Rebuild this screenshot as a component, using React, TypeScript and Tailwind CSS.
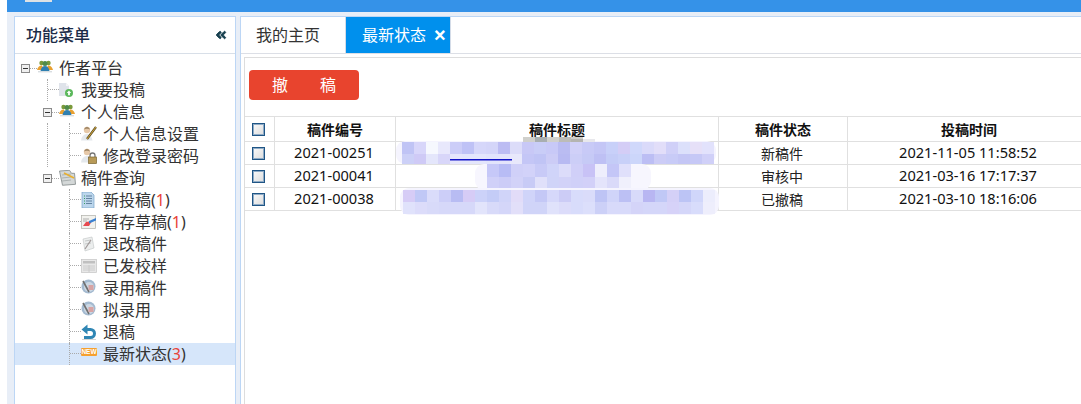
import React from 'react'
import { FaAngleDoubleLeft } from 'react-icons/fa'

// blurred (mosaic) title cells of the table
const mosaic = [
  { x: 7, y: 6, h: 12, c: 'c0c4f5 d8d6fa f6f8fe e8e8fc cccdf8 bfc2f6 d6d7fa d4d5f9 bcbcf3 dcdcf9 c8c8f6 c9cdf7 c8c9f7 babcf2 d0d0f8 c8caf7 c4c6f6 c8d0f9 d4cdf6 d0d8fb dadafa e2def9 d0d0f8 dce0fb e6e0f8 e2e2fc' },
  { x: 7, y: 18, h: 10, c: 'ccd0f7 cfcaf6 e4e6fb d8d6f9 e6e6fc e4e6fc e4e6fc e2e4fc e4e4fb e8e8fb c4c6f6 c0c4f5 ccccf6 b8baf2 cccef7 c6caf6 bec0f4 c4ccf7 c8d0f8 ccd6fa bcbef4 ccccf6 c8cbf7 c4c6f5 c6c8f6 d0d0f8' },
  { x: 92, y: 28, h: 13, c: 'c6c8f8 b8bcf5 d0d0f8 d2d2f9 c8caf7 d0d4f9 dcdcfa d0cff8 c8c2f6 eeeefc c4c6f7 e0e0fb' },
  { x: 92, y: 41, h: 11, c: 'd0d0f8 ccccf7 d2d2f8 c8cbf6 e0e0fa d0d4f8 d2d2f8 d0d0f8 d2d0f8 e4e4fb dadaf9 f0f0fc' },
  { x: 8, y: 54, h: 12, c: 'd6ccf6 c0c8f6 dadcfa cccef8 b8bcf3 d6ccf6 ccd2f9 c4ccf7 d0d4f9 e2dcf8 d0d4f9 c4c8f6 d6d8fa ccccf6 d8dcfb dadcfa bec4f5 d0d4f9 bcc0f4 d8dafa b8b6f2 c0c8f6 d4d0f7 bcc4f5 d0d6fa ecedfc' },
  { x: 8, y: 66, h: 12, c: 'e0e2fb dcdcfa d8daf9 d6d8f9 d6d8f9 d6d8f9 e2e4fb d8daf9 d4d6f9 e2dff9 d0d4f8 d0d4f8 e0e2fb dcdcfa d8dcfb dcdffb ccd0f7 d8dafa d8dafa d4d4f8 d4d6f9 d4d6f9 d6d2f8 d4d6f9 d8dcfb eeeefc' },
]

const Mosaic = () => (
  <svg className="absolute left-[150px] top-[20px]" width="330" height="80" viewBox="0 0 330 80">
    <rect x="1" y="5" width="320" height="23" rx="9" fill="#f5f4fe" />
    <rect x="80" y="28" width="176" height="26" rx="9" fill="#f7f6fe" />
    <rect x="5" y="52" width="319" height="27" rx="9" fill="#f5f4fe" />
    <rect x="128" y="1" width="60" height="5" fill="#d0d0cc" />
    <rect x="140" y="1" width="12" height="5" fill="#a8aeb0" />
    <rect x="164" y="1" width="12" height="5" fill="#bcbcb8" />
    <rect x="176" y="3" width="12" height="3" fill="#b4b4b0" />
    <rect x="188" y="3" width="12" height="3" fill="#e8e8ec" />
    {mosaic.map((row) =>
      row.c.split(' ').map((color, i) => (
        <rect key={row.y + '-' + i} x={row.x + i * 12} y={row.y} width="12" height={row.h} fill={'#' + color} />
      ))
    )}
    <rect x="55" y="23" width="62" height="1.5" fill="#1414c8" />
  </svg>
)

const Users = () => (
  <svg width="16" height="13" viewBox="0 0 16 13" className="-mt-1">
    <circle cx="4.5" cy="3" r="2.2" fill="#7a9a3a" />
    <circle cx="11.5" cy="3" r="2.2" fill="#7a9a3a" />
    <path d="M0 10 Q1.5 5 5 5.5 L7 10Z" fill="#e8a030" />
    <path d="M16 10 Q14.5 5 11 5.5 L9 10Z" fill="#e8a030" />
    <circle cx="8" cy="3.6" r="2.5" fill="#4f8a4a" />
    <path d="M3.5 11 Q4.5 6 8 6 Q11.5 6 12.5 11Z" fill="#2f7fb0" />
    <rect x="1" y="11" width="14" height="1.4" fill="#d8dde0" />
  </svg>
)

const DocAdd = () => (
  <svg width="16" height="16" viewBox="0 0 16 16">
    <path d="M0 1h7l3 3v10H0z" fill="#dfe3ea" />
    <path d="M7 1l3 3H7z" fill="#f4f4f6" />
    <circle cx="10" cy="11" r="4" fill="#5cb85c" />
    <path d="M10 8.5l2.2 2.4h-1.3v2.4H9.1v-2.4H7.8z" fill="#fff" />
  </svg>
)

const UserBase = () => (
  <>
    <circle cx="6" cy="4" r="3.2" fill="#e6c8a8" />
    <path d="M2.8 3.5 Q6 -2 9.2 3.5 Q6 2 2.8 3.5Z" fill="#a08868" />
    <path d="M0 14.5 Q1 8 6 8 Q10 8 11.5 14.5Z" fill="#e4e8ec" />
  </>
)

const UserPen = () => (
  <svg width="16" height="16" viewBox="0 0 16 16">
    <UserBase />
    <path d="M15 1L6 13" stroke="#5a4c22" strokeWidth="2.2" />
    <path d="M15 1L6 13" stroke="#e0b040" strokeWidth="0.9" />
  </svg>
)

const UserLock = () => (
  <svg width="16" height="16" viewBox="0 0 16 16">
    <UserBase />
    <path d="M9 9V7.5a2.5 2.5 0 0 1 5 0V9" fill="none" stroke="#777" strokeWidth="1.3" />
    <rect x="7.5" y="9" width="8" height="6.5" fill="#b89a58" stroke="#7a6430" strokeWidth="0.7" />
  </svg>
)

const QueryDoc = () => (
  <svg width="17" height="16" viewBox="0 0 17 16">
    <path d="M0.5 1l10 -0.7 2 3 3 0 1 11 -13 1z" fill="#d4d8d8" stroke="#7f8686" strokeWidth="0.8" />
    <path d="M3 5l9 -1M3 8l9 -1M3 11l9 -1" stroke="#9aa0a0" strokeWidth="0.7" />
    <path d="M5 3l10 5" stroke="#e8b030" strokeWidth="1.6" />
  </svg>
)

const DocList = () => (
  <svg width="14" height="16" viewBox="0 0 14 16">
    <path d="M1 0h9l3 3v13H1z" fill="#bcd6ec" stroke="#7aa4c8" strokeWidth="0.7" />
    <path d="M5 4h6M5 6.5h6M5 9h6M5 11.5h6" stroke="#5a7a9a" strokeWidth="0.9" />
    <path d="M3 4h1M3 6.5h1M3 9h1M3 11.5h1" stroke="#3aa060" strokeWidth="1" />
  </svg>
)

const Draft = () => (
  <svg width="16" height="14" viewBox="0 0 16 14">
    <rect x="0.5" y="0.5" width="14" height="13" fill="#f2f2ee" stroke="#b0b0aa" strokeWidth="0.7" />
    <path d="M2 4h6M2 6h4" stroke="#a0a0a0" strokeWidth="0.8" />
    <path d="M2 11l3 -4 6 -1 -3 5z" fill="#e84a50" />
    <path d="M8 6l7 -3 0 2.5 -7 3z" fill="#3a80d0" />
  </svg>
)

const ReturnDoc = () => (
  <svg width="14" height="16" viewBox="0 0 14 16">
    <path d="M2 3l9 -2 2 11 -9 3z" fill="#eceeee" stroke="#c0c4c4" strokeWidth="0.6" />
    <path d="M4 5l6 -1M4 8l6 -1" stroke="#b4b8b8" strokeWidth="0.7" />
    <path d="M4 13l6 -9" stroke="#a09898" strokeWidth="1.2" />
  </svg>
)

const Paper = () => (
  <svg width="16" height="14" viewBox="0 0 16 14">
    <rect x="0.5" y="0.5" width="15" height="13" fill="#e8e8e8" stroke="#c4c4c4" strokeWidth="0.7" />
    <rect x="2" y="2" width="12" height="2.5" fill="#c0c0c0" />
    <path d="M2 7h12M2 9h12M2 11h12M8 6v7" stroke="#c8c8c8" strokeWidth="0.9" />
  </svg>
)

const Accept = () => (
  <svg width="15" height="15" viewBox="0 0 15 15" className="-mt-1">
    <ellipse cx="7.5" cy="7.5" rx="7" ry="7" fill="#a4bad0" />
    <ellipse cx="8" cy="8" rx="5" ry="5" fill="#ccd8e4" />
    <path d="M2 2l6 11" stroke="#707070" strokeWidth="1.6" />
    <rect x="7.5" y="6" width="5" height="5" fill="#d8a4a4" />
  </svg>
)

const Undo = () => (
  <svg width="16" height="17" viewBox="0 0 16 17">
    <path d="M6.5 0.5L0.5 5.5 6.5 10.5z" fill="#2f86b4" />
    <path d="M5 5.5H9.5a4 4 0 0 1 0 8H3" fill="none" stroke="#2f86b4" strokeWidth="3" />
    <rect x="1" y="15" width="14" height="1" fill="#d4d6d6" />
  </svg>
)

const NewBadge = () => (
  <svg width="16" height="8" viewBox="0 0 16 8" className="-mt-[5px]">
    <rect width="16" height="8" rx="1" fill="#f5a030" />
    <text x="8" y="6.3" textAnchor="middle" fontSize="6.5" fontWeight="700" fill="#fff" fontFamily="Liberation Sans">NEW</text>
  </svg>
)

const Box = () => (
  <div className="flex justify-start">
    <div className="ml-[6px] w-[9px] h-[9px] border border-[#8a8a8a] bg-[#f0f0f0] flex items-center justify-center shrink-0">
      <div className="w-[5px] h-px bg-[#333]" />
    </div>
    <div className="w-[7px] self-center border-b border-dotted border-[#aaa]" />
  </div>
)

// vertical dotted guide, optional elbow to the right
const Guide = ({ elbow }: { elbow?: boolean }) => (
  <div className="w-[22px] h-full shrink-0">
    <div className="ml-[10px] h-full border-l border-dotted border-[#aaa]">
      {elbow && <div className="h-1/2 w-[11px] border-b border-dotted border-[#aaa]" />}
    </div>
  </div>
)

const Blank = () => <div className="w-[22px] shrink-0" />

type Row = {
  label: string
  count?: number
  level: number
  parent?: boolean
  outer?: boolean
  icon: React.ReactNode
  active?: boolean
}

const rows: Row[] = [
  { label: '作者平台', level: 0, parent: true, icon: <Users /> },
  { label: '我要投稿', level: 1, icon: <DocAdd /> },
  { label: '个人信息', level: 1, parent: true, icon: <Users /> },
  { label: '个人信息设置', level: 2, outer: true, icon: <UserPen /> },
  { label: '修改登录密码', level: 2, outer: true, icon: <UserLock /> },
  { label: '稿件查询', level: 1, parent: true, icon: <QueryDoc /> },
  { label: '新投稿', count: 1, level: 2, icon: <DocList /> },
  { label: '暂存草稿', count: 1, level: 2, icon: <Draft /> },
  { label: '退改稿件', level: 2, icon: <ReturnDoc /> },
  { label: '已发校样', level: 2, icon: <Paper /> },
  { label: '录用稿件', level: 2, icon: <Accept /> },
  { label: '拟录用', level: 2, icon: <Accept /> },
  { label: '退稿', level: 2, icon: <Undo /> },
  { label: '最新状态', count: 3, level: 2, icon: <NewBadge />, active: true },
]

const TreeRow = ({ row }: { row: Row }) => (
  <div className={`flex h-[22px] items-stretch text-[16px] leading-[22px] text-[#333] ${row.active ? 'bg-[#d6e6fa]' : ''}`}>
    {row.level === 0 && <div className="w-[22px] flex items-center shrink-0"><Box /></div>}
    {row.level === 1 && (
      <>
        <Blank />
        {row.parent ? <div className="w-[22px] flex items-center shrink-0"><Box /></div> : <Guide elbow />}
      </>
    )}
    {row.level === 2 && (
      <>
        <Blank />
        {row.outer ? <Guide /> : <Blank />}
        <Guide elbow />
      </>
    )}
    <div className="w-[22px] flex items-center shrink-0">{row.icon}</div>
    <span className="whitespace-nowrap">
      {row.label}
      {row.count !== undefined && (
        <>
          (<span className="text-[#e8433a]">{row.count}</span>)
        </>
      )}
    </span>
  </div>
)

const Check = () => (
  <div className="w-[13px] h-[13px] mr-[2px] border border-[#1f5585] shadow-[inset_0_0_0_1px_#8fabc6] bg-gradient-to-br from-[#fafafa] to-[#dcdcdc]" />
)

const records = [
  { no: '2021-00251', status: '新稿件', time: '2021-11-05 11:58:52' },
  { no: '2021-00041', status: '审核中', time: '2021-03-16 17:17:37' },
  { no: '2021-00038', status: '已撤稿', time: '2021-03-10 18:16:06' },
]

const cell = 'flex items-center justify-center border-r border-[#e0e0e0] shrink-0'

export default function App() {
  return (
    <div className="w-[1081px] h-[404px] flex overflow-hidden bg-white font-['Noto_Sans','Noto_Sans_CJK_SC',sans-serif]">
      <div className="w-[7px] shrink-0" />
      <div className="flex-1 flex flex-col min-w-0 bg-[#e8eef7]">
        <div className="h-3 bg-[#3592e8] pl-[18px] shrink-0">
          <div className="w-[27px] h-[2px] bg-[#dde1e4]" />
        </div>
        <div className="flex-1 flex pt-1 pl-[7px] gap-1 min-h-0">
          {/* left menu */}
          <div className="w-[222px] shrink-0 border border-b-0 border-[#bcd6f5] bg-white">
            <div className="h-[37px] border-b border-[#d8dfe8] flex items-center justify-between pl-[11px] pr-[8px]">
              <span className="text-[16px] font-medium text-[#1c2c48]">功能菜单</span>
              <FaAngleDoubleLeft size={12} color="#17404f" stroke="#17404f" strokeWidth={40} />
            </div>
            <div className="pt-[3px]">
              {rows.map((row) => (
                <TreeRow key={row.label} row={row} />
              ))}
            </div>
          </div>

          {/* right content */}
          <div className="flex-1 min-w-0 flex flex-col border-l border-t border-[#bcd6f5] bg-white">
            <div className="h-[37px] flex border-b border-[#dcdfe6] shrink-0">
              <div className="w-[105px] border-r border-[#d4dce8] pl-[15px] flex items-center text-[16px] text-[#333]">我的主页</div>
              <div className="w-[105px] border-r border-[#d4dce8] bg-[#0090ed] pl-[16px] flex items-center gap-2 text-[16px] text-white">
                最新状态
                <span className="font-['Liberation_Sans'] font-bold text-[20px] leading-none">×</span>
              </div>
            </div>
            <div className="flex-1 pt-[3px] pl-[3px] min-h-0">
              <div className="h-full border-l border-t border-[#dddddd] overflow-hidden">
                <button className="mt-3 ml-1 w-[110px] h-[30px] rounded bg-[#e8442e] text-white text-[16px] flex items-center justify-center gap-8">
                  <span>撤</span>
                  <span>稿</span>
                </button>
                <div className="relative mt-4 text-[14px] text-[#222]">
                  <div className="flex h-[26px] border-y border-[#e0e0e0] font-bold text-[#111]">
                    <div className={`${cell} w-[30px]`}><Check /></div>
                    <div className={`${cell} w-[121px]`}>稿件编号</div>
                    <div className={`${cell} w-[323px]`}>稿件标题</div>
                    <div className={`${cell} w-[129px]`}>稿件状态</div>
                    <div className="w-[242px] shrink-0 flex items-center justify-center">投稿时间</div>
                  </div>
                  {records.map((r) => (
                    <div key={r.no} className="flex h-[23px] border-b border-[#e0e0e0]">
                      <div className={`${cell} w-[30px]`}><Check /></div>
                      <div className={`${cell} w-[121px] pr-[2px] text-[14.6px] text-[#111]`}>{r.no}</div>
                      <div className={`${cell} w-[323px]`} />
                      <div className={`${cell} w-[129px] pr-[2px]`}>{r.status}</div>
                      <div className="w-[240px] shrink-0 flex items-center justify-center text-[14.6px] text-[#111]">{r.time}</div>
                    </div>
                  ))}
                  <Mosaic />
                </div>
              </div>
            </div>
          </div>
        </div>
      </div>
    </div>
  )
}
